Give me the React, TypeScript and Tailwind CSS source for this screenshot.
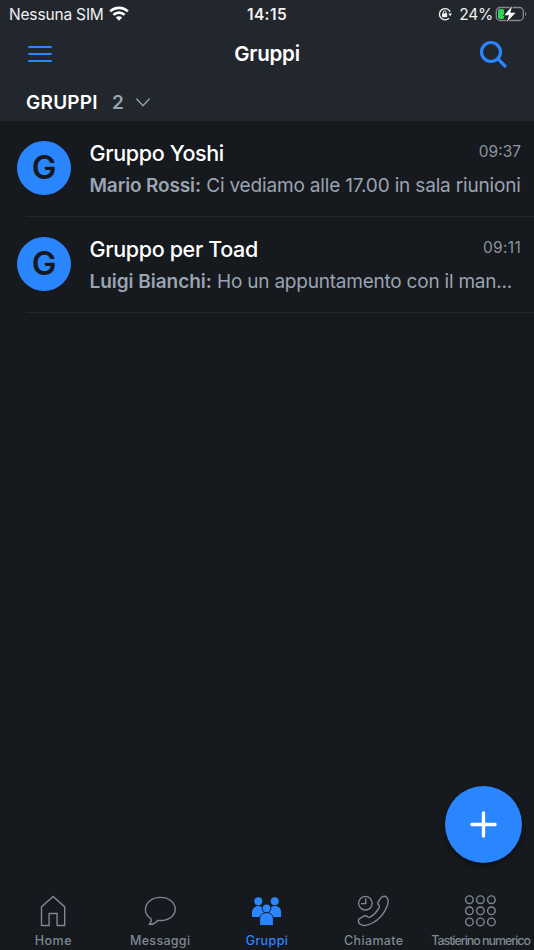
import React from "react";

interface Chat {
  id: number;
  title: string;
  sender: string;
  senderClass: string;
  message: string;
  messageClass: string;
  time: string;
  timeClass: string;
}

interface Tab {
  label: string;
  icon: React.ReactNode;
  active?: boolean;
  labelClass: string;
}

const chats: Chat[] = [
  {
    id: 1,
    title: "Gruppo Yoshi",
    sender: "Mario Rossi:",
    senderClass: "tracking-[-0.15px]",
    message: "Ci vediamo alle 17.00 in sala riunioni",
    messageClass: "tracking-[-0.17px]",
    time: "09:37",
    timeClass: "tracking-[0px]",
  },
  {
    id: 2,
    title: "Gruppo per Toad",
    sender: "Luigi Bianchi:",
    senderClass: "tracking-[-0.04px]",
    message: "Ho un appuntamento con il man...",
    messageClass: "tracking-[-0.22px]",
    time: "09:11",
    timeClass: "tracking-[0.3px]",
  },
];

const HomeIcon = () => (
  <svg width="34" height="34" viewBox="0 0 34 34" fill="none" stroke="currentColor" strokeWidth="1.4">
    <path d="M5.5 31.5V12.9L17.1 2.4l11.6 10.5v18.6h-7.6V19.5h-8v12z" />
  </svg>
);

const MessageIcon = () => (
  <svg width="34" height="34" viewBox="0 0 34 34" fill="none" stroke="currentColor" strokeWidth="1.4" strokeLinejoin="round">
    <path d="M7.8 24.5C4.4 22.3 2.4 19.4 2.4 15.7c0-7 6.400-12.300 14.900-12.300s14.900 5 14.900 11.600S25.800 26.500 18.100 26.500h-3.500c-2 2.700-4.600 4.200-8.500 3.800 1.900-1.600 2.700-3.500 1.700-5.800z" />
  </svg>
);

const GroupIcon = () => (
  <svg width="34" height="34" viewBox="0 0 34 34" fill="currentColor">
    <circle cx="8.300" cy="7.300" r="4" />
    <circle cx="24.700" cy="7.300" r="4" />
    <path d="M2 23.100v-4.800c0-3.500 2.600-6.200 6.200-6.200s6.200 2.700 6.200 6.200v4.800z" />
    <path d="M18.700 23.100v-4.800c0-3.500 2.600-6.200 6.200-6.200s6.200 2.700 6.200 6.200v4.800z" />
    <g stroke="#16191d" strokeWidth="1">
      <circle cx="16.500" cy="14.400" r="4.400" />
      <path d="M9.600 31.600V25c0-3.700 2.900-6.400 6.900-6.400s6.900 2.700 6.900 6.400v6.600z" />
    </g>
  </svg>
);

const CallIcon = () => (
  <svg width="34" height="34" viewBox="0 0 34 34" fill="none" stroke="currentColor" strokeWidth="1.4" strokeLinejoin="round">
    <circle cx="8.400" cy="9.200" r="6.800" />
    <path d="M8.700 4.300v5.300H4" />
    <path d="M25 3c1.800-1.100 3.500-1 4.600.2 2 2.200 1.800 5.800.6 8.800-2.600 6.600-7.800 13.400-14.700 17-4 2.100-7.500 3.200-10.500 2.200-2-.7-3.400-2.200-3.600-3.800-.1-1.400.2-2.100 1.200-2.700l4.200-2.500c1.400-.8 2.400-.6 3.400.4.900.9 2 1 3.200.3 3.600-2 6.600-5.300 8.600-8.700.8-1.400.7-2.300-.3-3.200s-1.300-1.800-.6-3l2.700-3.900c.4-.6.700-.8 1.200-1.100z" />
  </svg>
);

const KeypadIcon = () => (
  <svg width="34" height="34" viewBox="0 0 34 34" fill="none" stroke="currentColor" strokeWidth="1.4">
    {[5.7, 16.8, 27.9].map((y) =>
      [5.4, 16.4, 27.4].map((x) => <circle key={`${x}-${y}`} cx={x} cy={y} r="3.800" />)
    )}
  </svg>
);

const tabs: Tab[] = [
  { label: "Home", icon: <HomeIcon />, labelClass: "tracking-[0.5px]" },
  { label: "Messaggi", icon: <MessageIcon />, labelClass: "tracking-[0.3px]" },
  { label: "Gruppi", icon: <GroupIcon />, active: true, labelClass: "tracking-[0.4px]" },
  { label: "Chiamate", icon: <CallIcon />, labelClass: "tracking-[0.35px]" },
  { label: "Tastierino numerico", icon: <KeypadIcon />, labelClass: "tracking-[-1.06px]" },
];

const StatusBar: React.FC = () => (
  <div className="grid h-7 grid-cols-3 items-center text-[15.5px] text-[#f1f1f2]">
    <div className="flex items-center gap-[5px] pl-[9px]">
      <span className="pt-px tracking-[-0.17px]">Nessuna SIM</span>
      <svg className="-mt-0.5" width="20" height="15" viewBox="0 0 20 15" fill="none" stroke="white" strokeWidth="2.7">
        <path d="M1.200 5.400a12.500 12.500 0 0 1 17.600 0" />
        <path d="M4.400 8.900a8 8 0 0 1 11.200 0" />
        <path d="M6.800 11.600a4.600 4.600 0 0 1 6.400 0L10 14.700z" fill="white" stroke="none" />
      </svg>
    </div>
    <div className="pt-px text-center font-semibold tracking-[0.4px]">14:15</div>
    <div className="flex items-center justify-end pr-[7px]">
      <svg className="mr-[7px]" width="14" height="14" viewBox="0 0 14 14" fill="none" stroke="#f1f1f2" strokeWidth="1.3">
        <path d="M11 11.200A5.600 5.600 0 1 1 12.200 5" />
        <path d="M10.200 6.400h3.800l-1.900 2.800z" fill="#f1f1f2" stroke="none" />
        <rect x="4" y="6.200" width="5.200" height="4" rx=".6" fill="#f1f1f2" stroke="none" />
        <path d="M5.200 6.500V5.200a1.400 1.400 0 0 1 2.800 0v1.300" strokeWidth="1" />
      </svg>
      <span className="mr-0.5 pt-px tracking-[-0.2px]">24%</span>
      <svg className="-mt-px" width="32" height="16" viewBox="0 0 32 16">
        <rect x="1.300" y="1.500" width="27" height="13" rx="3.800" fill="none" stroke="#85888d" strokeWidth="1.300" />
        <path d="M30 5.800v4.400c1.600-.8 1.600-3.600 0-4.400z" fill="#85888d" />
        <rect x="3" y="3" width="6.200" height="10" rx="1.800" fill="#30d158" />
        <path d="M17.200 0 9.400 9.200h4.700L11.700 16 20.500 6.800h-5.300z" fill="white" stroke="#22262d" strokeWidth="1.600" paintOrder="stroke" />
      </svg>
    </div>
  </div>
);

const ChatRow: React.FC<{ chat: Chat }> = ({ chat }) => (
  <li className="flex h-24 flex-col">
    <div className="flex flex-1 items-center gap-[18.5px] pr-[13px] pb-0.5 pl-[17px]">
      <div className="flex size-[54px] shrink-0 items-center justify-center rounded-full bg-[#2a86ff] text-[33px] font-semibold text-[#16191d]">
        G
      </div>
      <div className="min-w-0 flex-1">
        <div className="flex items-center justify-between">
          <h2 className="text-[21.5px] leading-[34px] font-medium tracking-[-0.35px] whitespace-nowrap text-white">
            {chat.title}
          </h2>
          <time className={`-mt-px text-[15.5px] text-[#8b949f] ${chat.timeClass}`}>{chat.time}</time>
        </div>
        <p className="mt-0.5 text-[19px] leading-7 whitespace-nowrap text-[#9aa4b2]">
          <strong className={`font-semibold ${chat.senderClass}`}>{chat.sender}</strong>{" "}
          <span className={chat.messageClass}>{chat.message}</span>
        </p>
      </div>
    </div>
    <div className="ml-[26px] h-px bg-[#25292e]" />
  </li>
);

const App: React.FC = () => {
  return (
    <div className="relative flex h-[950px] w-[534px] flex-col overflow-hidden bg-[#16191d] font-['Inter','Liberation_Sans',sans-serif]">
      <header className="h-[121px] shrink-0 bg-[#22262d]">
        <StatusBar />
        <div className="grid h-[52px] grid-cols-3 items-center">
          <button className="ml-7 w-6" aria-label="Menu">
            <svg width="24" height="18" viewBox="0 0 24 18" stroke="#2a86ff" strokeWidth="2.2" strokeLinecap="round">
              <path d="M1.100 2h21.800M1.100 9h21.800M1.100 16h21.800" />
            </svg>
          </button>
          <h1 className="text-center text-[20.5px] font-semibold tracking-[-0.25px] text-white">Gruppi</h1>
          <button className="mr-[27.5px] justify-self-end" aria-label="Cerca">
            <svg width="28" height="28" viewBox="0 0 28 28" fill="none" stroke="#2a86ff" strokeWidth="3.2" strokeLinecap="round">
              <circle cx="12" cy="12" r="9.500" />
              <path d="m19.200 19.200 6.800 6.800" />
            </svg>
          </button>
        </div>
        <div className="flex h-11 items-center pt-0.5 pl-[26px]">
          <span className="text-[19px] font-semibold tracking-[0.25px] text-white">GRUPPI</span>
          <span className="ml-3.5 text-[19px] font-semibold text-[#9aa4b2]">2</span>
          <svg className="-mt-0.5 ml-3" width="14" height="9" viewBox="0 0 14 9" fill="none" stroke="#9aa4b2" strokeWidth="1.3" strokeLinecap="round">
            <path d="m.8 1 6.200 6.800L13.200 1" />
          </svg>
        </div>
      </header>

      <ul className="flex-1">
        {chats.map((chat) => (
          <ChatRow key={chat.id} chat={chat} />
        ))}
      </ul>

      {/* Floating new group button */}
      <button
        className="absolute right-3 bottom-[87px] flex size-[77px] items-center justify-center rounded-full bg-[#2a86ff] shadow-[0_2px_5px_rgba(0,0,0,0.5)]"
        aria-label="Nuovo gruppo"
      >
        <svg width="27" height="27" viewBox="0 0 27 27" stroke="white" strokeWidth="3.3" strokeLinecap="round">
          <path d="M13.500 1.900v23.200M1.900 13.500h23.200" />
        </svg>
      </button>

      <nav className="grid h-[58px] shrink-0 grid-cols-5">
        {tabs.map((tab) => (
          <a
            key={tab.label}
            className={`flex flex-col items-center gap-[3px] pt-0.5 ${tab.active ? "text-[#2a86ff]" : "text-[#7d8894]"}`}
          >
            {tab.icon}
            <span className={`text-[12.5px] leading-5 font-medium whitespace-nowrap ${tab.labelClass}`}>{tab.label}</span>
          </a>
        ))}
      </nav>
    </div>
  );
};

export default App;
